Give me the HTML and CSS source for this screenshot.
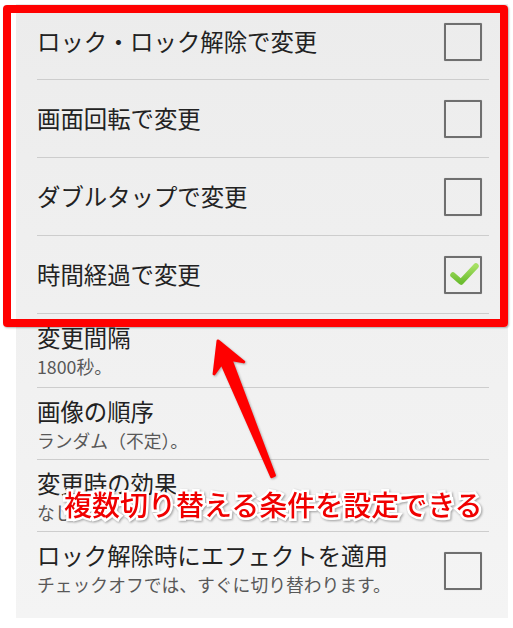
FILE: index.html
```html
<!DOCTYPE html>
<html lang="ja">
<head>
<meta charset="utf-8">
<title>設定</title>
<link rel="stylesheet" href="styles.css">
</head>
<body>
<div class="screen">
  <div class="panel">
    <div class="row check-row first">
      <span class="title">ロック・ロック解除で変更</span>
      <span class="box"></span>
    </div>
    <div class="row check-row">
      <span class="title">画面回転で変更</span>
      <span class="box"></span>
    </div>
    <div class="row check-row">
      <span class="title">ダブルタップで変更</span>
      <span class="box"></span>
    </div>
    <div class="row check-row">
      <span class="title">時間経過で変更</span>
      <span class="box checked">
        <svg class="tick" viewBox="0 0 34 34" width="34" height="34">
          <defs>
            <linearGradient id="g" x1="0" y1="0" x2="0" y2="1">
              <stop offset="0" stop-color="#a6e064"/>
              <stop offset="1" stop-color="#6cbd30"/>
            </linearGradient>
          </defs>
          <path d="M7 17 L15 24 L30 8" fill="none" stroke="url(#g)" stroke-width="5.5" stroke-linecap="round" stroke-linejoin="round"/>
        </svg>
      </span>
    </div>
    <div class="row detail-row r1">
      <div class="texts"><div class="title">変更間隔</div><div class="sub">1800秒。</div></div>
    </div>
    <div class="row detail-row">
      <div class="texts"><div class="title">画像の順序</div><div class="sub">ランダム（不定）。</div></div>
    </div>
    <div class="row detail-row">
      <div class="texts"><div class="title">変更時の効果</div><div class="sub">なし</div></div>
    </div>
    <div class="row detail-row last">
      <div class="texts"><div class="title">ロック解除時にエフェクトを適用</div><div class="sub">チェックオフでは、すぐに切り替わります。</div></div>
      <span class="box low"></span>
    </div>
  </div>
  <div class="frame"></div>
  <svg class="arrow" viewBox="0 0 513 628" width="513" height="628">
    <polygon points="218,341 243.7,361.9 230.9,359.5 274.4,475.4 271.6,476.6 221.7,363.3 214.1,373.9" fill="#ff0000" stroke="#ff0000" stroke-width="3" stroke-linejoin="round"/>
  </svg>
  <div class="note">複数切り替える条件を設定できる</div>
</div>
</body>
</html>
```
FILE: styles.css
```css
html, body {
  margin: 0;
  padding: 0;
  background: #ffffff;
}
body {
  font-family: "Noto Sans CJK JP", "Noto Sans", sans-serif;
}
.screen {
  position: relative;
  width: 513px;
  height: 628px;
  overflow: hidden;
}
.panel {
  margin: 4px 0 0 16px;
  width: 492px;
  height: 614px;
  box-sizing: border-box;
  padding: 0 19px 0 21px;
  background: linear-gradient(#ececec, #f4f4f4);
}
.row {
  display: flex;
  box-sizing: border-box;
  border-bottom: 1px solid #cdcdcd;
  padding-right: 7px;
}
.check-row {
  height: 78px;
  align-items: center;
  justify-content: space-between;
}
.check-row.first {
  height: 76px;
}
.title {
  font-size: 23.4px;
  line-height: 29px;
  color: #222222;
  white-space: nowrap;
}
.sub {
  font-size: 17.8px;
  line-height: 29px;
  color: #585858;
  white-space: nowrap;
}
.detail-row {
  height: 72px;
  align-items: flex-start;
  justify-content: space-between;
}
.detail-row.r1 {
  height: 74px;
}
.detail-row .texts {
  padding-top: 9px;
}
.detail-row.last {
  border-bottom: none;
  height: 86px;
}
.box {
  width: 38px;
  height: 38px;
  box-sizing: border-box;
  border: 2px solid #6f6f6f;
  border-radius: 1px;
  box-shadow: 0 0 1px rgba(0, 0, 0, 0.25);
  display: flex;
  align-items: center;
  justify-content: center;
  flex: none;
}
.box.low {
  margin-top: 20px;
}
.tick {
  display: block;
}
.frame {
  position: absolute;
  left: 3px;
  top: 5px;
  width: 505px;
  height: 322px;
  box-sizing: border-box;
  border: 8px solid #ff0000;
  border-radius: 4px;
  box-shadow: 1px 1px 2px rgba(0, 0, 0, 0.3);
}
.arrow {
  position: absolute;
  left: 0;
  top: 0;
  filter: drop-shadow(1px 1px 1px rgba(0, 0, 0, 0.3));
}
.note {
  position: absolute;
  left: 64px;
  top: 486px;
  font-size: 28px;
  line-height: 36px;
  font-weight: 500;
  color: #f00000;
  white-space: nowrap;
  -webkit-text-stroke: 5px #ffffff;
  paint-order: stroke fill;
  filter: drop-shadow(1px 1px 1px rgba(0, 0, 0, 0.35));
}
```
